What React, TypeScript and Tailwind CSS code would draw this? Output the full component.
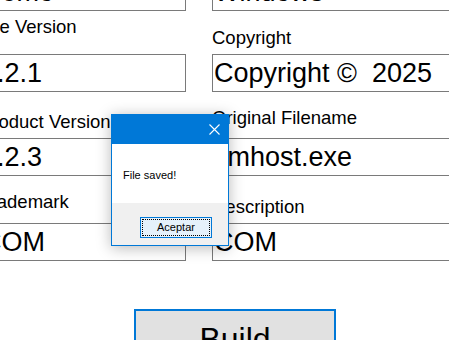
import React from "react";

// Version-info form with a "File saved!" message box on top.

type Field = { label: string; value: string; gap: number };

const ROWS: { height: number; left: Field; right: Field }[] = [
  {
    height: 81,
    left: { label: "File Version", value: "1.2.1", gap: 16 },
    right: { label: "Copyright", value: "Copyright ©  2025", gap: 5 },
  },
  {
    height: 84,
    left: { label: "Product Version", value: "1.2.3", gap: 5 },
    right: { label: "Original Filename", value: "vmhost.exe", gap: 9 },
  },
  {
    height: 85,
    left: { label: "Trademark", value: "COM", gap: 10 },
    right: { label: "Description", value: "COM", gap: 5 },
  },
];

function TextBox({ value }: { value: string }) {
  return (
    <div className="h-[38px] border border-[#7a7a7a] bg-white pl-px text-[27px] leading-[36px] whitespace-pre overflow-hidden text-black">
      {value}
    </div>
  );
}

function FieldCell({ field }: { field: Field }) {
  return (
    <div className="flex flex-col justify-end">
      <div
        className="text-[18.5px] leading-[22px] whitespace-nowrap text-black"
        style={{ marginBottom: field.gap }}
      >
        {field.label}
      </div>
      <TextBox value={field.value} />
    </div>
  );
}

function MessageBox() {
  return (
    <div className="absolute left-[111px] top-[114px] w-[118px] h-[132px] flex flex-col border border-[#0078d7] bg-white shadow-[0_2px_14px_rgba(0,0,0,0.28)]">
      <div className="h-[29px] bg-[#0078d7] flex items-center justify-end pr-[8px]">
        <svg width="11" height="11" viewBox="0 0 11 11">
          <path d="M0.5 0.5 L10.5 10.5 M10.5 0.5 L0.5 10.5" stroke="white" strokeWidth="1.1" />
        </svg>
      </div>
      <div className="h-[59px] pl-[11px] pt-[25px] text-[11px] leading-[13px] text-black">
        File saved!
      </div>
      <div className="h-[42px] bg-[#f0f0f0] pt-[11px] pl-[28px]">
        <button className="w-[72px] h-[21px] border border-[#0078d7] bg-[#e5f1fb] p-px">
          <span className="flex h-full w-full items-center justify-center border border-dotted border-black text-[11px] leading-[13px] text-black">
            Aceptar
          </span>
        </button>
      </div>
    </div>
  );
}

export default function App() {
  return (
    <div className="relative w-[449px] h-[340px] overflow-hidden bg-white font-['Liberation_Sans',Arial,sans-serif]">
      <div className="ml-[-20px] w-[520px]">
        <div className="grid grid-cols-[206px_280px] gap-x-[26px] mt-[-27px]">
          <TextBox value="Demo" />
          <TextBox value="Windows" />
        </div>
        {ROWS.map((row, i) => (
          <div
            key={i}
            className="grid grid-cols-[206px_280px] gap-x-[26px]"
            style={{ height: row.height }}
          >
            <FieldCell field={row.left} />
            <FieldCell field={row.right} />
          </div>
        ))}
      </div>
      <button className="ml-[134px] mt-[48px] w-[202px] h-[60px] border-2 border-[#0078d7] bg-[#e1e1e1] text-[32px] text-black">
        Build
      </button>
      <MessageBox />
    </div>
  );
}
